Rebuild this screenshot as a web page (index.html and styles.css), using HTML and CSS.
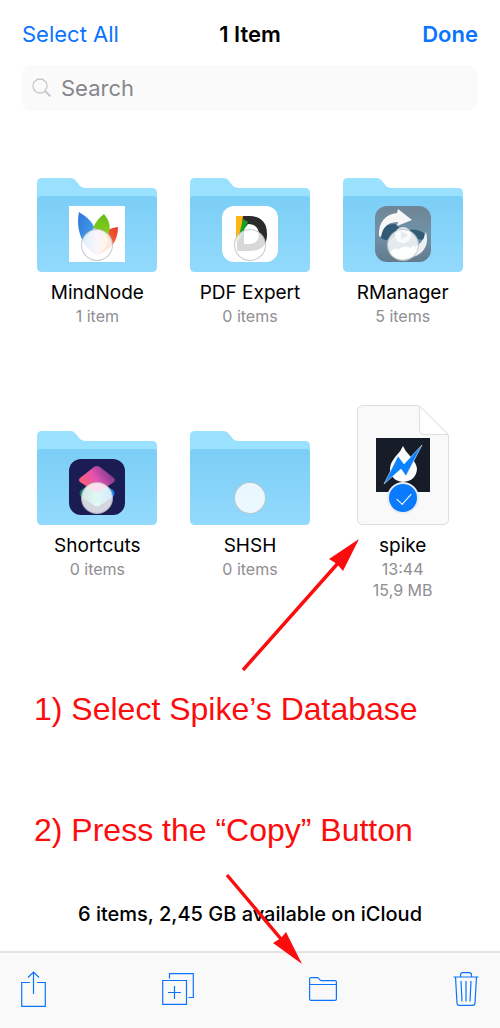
FILE: index.html
```html
<!DOCTYPE html>
<html lang="en">
<head>
<meta charset="utf-8">
<meta name="viewport" content="width=device-width, initial-scale=1">
<title>Files</title>
<link rel="stylesheet" href="styles.css">
</head>
<body>
<svg class="defs" width="0" height="0" aria-hidden="true">
  <defs>
    <linearGradient id="front" x1="0" y1="0" x2="0" y2="1"><stop offset="0" stop-color="#7bcef6"/><stop offset="1" stop-color="#93dafd"/></linearGradient>
    <linearGradient id="slate" x1="0" y1="0" x2="0" y2="1"><stop offset="0" stop-color="#6f8494"/><stop offset=".5" stop-color="#7192a9"/><stop offset="1" stop-color="#647a8c"/></linearGradient>
    <linearGradient id="leafBlue" x1="0" y1="0" x2="1" y2="1"><stop offset="0" stop-color="#2f75dc"/><stop offset="1" stop-color="#4ab3f2"/></linearGradient>
    <linearGradient id="leafGreen" x1="0" y1="0" x2="0" y2="1"><stop offset="0" stop-color="#62bd18"/><stop offset="1" stop-color="#a6d91f"/></linearGradient>
    <linearGradient id="leafRed" x1="1" y1="0" x2="0" y2="1"><stop offset="0" stop-color="#e8352c"/><stop offset="1" stop-color="#ffa32b"/></linearGradient>
    <linearGradient id="leafMix" x1="0" y1="0" x2="1" y2="0"><stop offset="0" stop-color="#43b9ee"/><stop offset=".5" stop-color="#e9c9ee"/><stop offset="1" stop-color="#ffc657"/></linearGradient>
    <linearGradient id="pink" x1="0" y1=".8" x2="1" y2=".3"><stop offset="0" stop-color="#ff6460"/><stop offset=".5" stop-color="#e653b0"/><stop offset="1" stop-color="#6b3588"/></linearGradient>
    <linearGradient id="teal" x1="0" y1="0" x2="1" y2="0"><stop offset="0" stop-color="#176567"/><stop offset=".5" stop-color="#58dcc5"/><stop offset="1" stop-color="#087bf4"/></linearGradient>
    <symbol id="folder" viewBox="0 0 120 94">
      <path fill="#99e1ff" d="M0 90V5Q0 0 5 0H33Q37 0 39 3L43 8Q45 10 49 10H115Q120 10 120 15V90Z"/>
      <path fill="url(#front)" d="M0 22Q0 18 4 18H116Q120 18 120 22V89Q120 94 115 94H5Q0 94 0 89Z"/>
    </symbol>
  </defs>
</svg>

<header class="navbar">
  <button class="nav-btn" type="button">Select All</button>
  <h1 class="title">1 Item</h1>
  <button class="nav-btn nav-done" type="button">Done</button>
</header>

<label class="search">
  <svg class="search-icon" viewBox="0 0 20 20" aria-hidden="true"><circle cx="8" cy="8" r="7"/><path d="M13 13L18.500 18.500" stroke-width="2"/></svg>
  <input class="search-input" type="search" placeholder="Search" aria-label="Search">
</label>

<main class="content">
  <ul class="grid">
    <li class="tile">
      <div class="thumb">
        <svg class="folder" viewBox="0 0 120 94" aria-hidden="true">
          <use href="#folder"/>
          <path fill="#fff" d="M32 28h56v56H32z"/>
          <path fill="url(#leafBlue)" d="M42 34C50 39 56 44 58 52L60 77C47 70 38 54 42 34Z"/>
          <path fill="url(#leafRed)" d="M81 49C81 63 74 72 60 77L62 58Q70 50 81 49Z"/>
          <path fill="url(#leafGreen)" d="M67 36C73 43 74 50 71 57L60 72L56 50Q60 41 67 36Z"/>
          <path fill="url(#leafMix)" d="M47 65Q52 54 57 50Q66 52 72 62Q69 71 60 77Q50 71 47 65Z"/>
        </svg>
        <input class="check" type="checkbox" id="f1">
      </div>
      <label class="name" for="f1">MindNode</label>
      <span class="meta">1 item</span>
    </li>
    <li class="tile">
      <div class="thumb">
        <svg class="folder" viewBox="0 0 120 94" aria-hidden="true">
          <use href="#folder"/>
          <rect x="32" y="28" width="56" height="56" rx="12" fill="#fff"/>
          <path fill="#2b2b2d" fill-rule="evenodd" d="M47 38H60Q77 39 77 56Q77 73 60 73H47ZM54 51V66H60Q69 65 69 56Q68 46 58 46Z"/>
          <path fill="#ffb514" d="M46 38H53L51 57L46 65Z"/>
          <path fill="#14a51e" d="M53 41L58 44L47 66Z"/>
        </svg>
        <input class="check" type="checkbox" id="f2">
      </div>
      <label class="name" for="f2">PDF Expert</label>
      <span class="meta">0 items</span>
    </li>
    <li class="tile">
      <div class="thumb">
        <svg class="folder" viewBox="0 0 120 94" aria-hidden="true">
          <use href="#folder"/>
          <rect x="32" y="28" width="56" height="56" rx="12" fill="url(#slate)"/>
          <path fill="#315b75" d="M38 60C37 50 43 46 52 46L58 51L49 61L42 62ZM66 52Q73 50 81 55V62L73 61Z"/>
          <path fill="#f7f7f7" d="M36 58C35 44 43 36 54 35L55 31L69 42L54 48L55 44C47 44 40 47 38 59Z"/>
          <path fill="#eef1f3" d="M83 54C87 69 79 78 65 80L70 70Q80 66 83 54Z"/>
          <path fill="#f4f6f7" d="M47 76Q49 69 56 71Q62 66 67 70L72 67Q72 78 62 81Q52 82 47 76Z"/>
          <circle cx="60" cy="57" r="8" fill="#dce5eb"/>
          <path fill="#6e8fa5" d="M58 53L65 57L58 62Z"/>
        </svg>
        <input class="check" type="checkbox" id="f3">
      </div>
      <label class="name" for="f3">RManager</label>
      <span class="meta">5 items</span>
    </li>
    <li class="tile">
      <div class="thumb">
        <svg class="folder" viewBox="0 0 120 94" aria-hidden="true">
          <use href="#folder"/>
          <rect x="32" y="28" width="56" height="56" rx="12" fill="#1c1c55"/>
          <path fill="url(#teal)" d="M44 59L58 51Q60 50 62 51L76 59Q79 62 76 66L62 75Q60 76 58 75L44 66Q41 62 44 59Z"/>
          <path fill="url(#pink)" d="M43 47L57 36Q60 34 63 36L77 47Q79 49 77 51L63 60Q60 62 57 60L43 51Q41 49 43 47Z"/>
        </svg>
        <input class="check" type="checkbox" id="f4">
      </div>
      <label class="name" for="f4">Shortcuts</label>
      <span class="meta">0 items</span>
    </li>
    <li class="tile">
      <div class="thumb">
        <svg class="folder" viewBox="0 0 120 94" aria-hidden="true"><use href="#folder"/></svg>
        <input class="check" type="checkbox" id="f5">
      </div>
      <label class="name" for="f5">SHSH</label>
      <span class="meta">0 items</span>
    </li>
    <li class="tile">
      <div class="thumb">
        <svg class="file" viewBox="0 0 92 120" aria-hidden="true">
          <path fill="#f9f9f9" stroke="#dedede" d="M6.500 .5H61.500L91.500 30V114Q91.500 119.500 86 119.500H6Q.5 119.500 .5 114V6Q.5 .5 6.500 .5Z"/>
          <path fill="#fff" stroke="#dedede" d="M62.500 1V24Q62.500 29.500 68 29.500H91Z"/>
          <path fill="#171d28" d="M19 33h54v54H19z"/>
          <path fill="#fff" d="M46 41Q48 46 53 51Q60 59 60 64Q59 76 46 77Q34 76 33 64Q33 58 39 51Q44 46 46 41Z"/>
          <path fill="#0b83ff" stroke="#fff" stroke-width=".5" d="M65 40L49 71L44 64L27 79L41 51L47 59Z"/>
        </svg>
        <input class="check" type="checkbox" id="f6" checked>
      </div>
      <label class="name" for="f6">spike</label>
      <span class="meta">13:44</span>
      <span class="meta">15,9 MB</span>
    </li>
  </ul>

  <p class="note note-select">1) Select Spike’s Database
    <svg class="arrow arrow-up" viewBox="0 0 120 134" aria-hidden="true"><path class="shaft" d="M2 131L98 23"/><path class="head" d="M118 0L102 32L96 25L88 20Z"/></svg>
  </p>
  <p class="note note-copy">2) Press the “Copy” Button
    <svg class="arrow arrow-down" viewBox="0 0 78 92" aria-hidden="true"><path class="shaft" d="M2 2L56 66"/><path class="head" d="M77 91L48 70L56 65L61 59Z"/></svg>
  </p>
  <p class="status">6 items, 2,45 GB available on iCloud</p>
</main>

<footer class="toolbar">
  <button class="tool" type="button" aria-label="Share"><svg width="25" height="36" viewBox="0 0 25 36"><path d="M9 11.500H.7V35.300H24.300V11.500H16M12.500 23V1M7 6.500L12.500 1L18 6.500"/></svg></button>
  <button class="tool" type="button" aria-label="Duplicate"><svg width="32" height="32" viewBox="0 0 32 32"><path d="M.7 7.500H24.500V31.300H.7ZM7.500 5.500V.7H31.300V24.500H26.500M12.500 13V26M6 19.500H19"/></svg></button>
  <button class="tool" type="button" aria-label="Move to folder"><svg width="28" height="24" viewBox="0 0 28 24"><path d="M.6 22V2Q.6 .6 2 .6H8Q9.500 .6 10.300 2Q11 3.600 12.500 3.600H26Q27.400 3.600 27.400 5V22Q27.400 23.400 26 23.400H2Q.6 23.400 .6 22ZM.6 7.500H27.400"/></svg></button>
  <button class="tool" type="button" aria-label="Delete"><svg width="26" height="34" viewBox="0 0 26 34"><path d="M.5 5H25.500M2.500 5L4 31Q4.200 33.300 6 33.300H20Q21.800 33.300 22 31L23.500 5M7.500 5V3Q7.500 .7 9.500 .7H16.500Q18.500 .7 18.500 3V5M8 9L9 29.500M13 9V29.500M18 9L17 29.500"/></svg></button>
</footer>
</body>
</html>
```
FILE: styles.css
```css
* {
  box-sizing: border-box;
}

body {
  margin: 0;
  min-height: 100vh;
  display: flex;
  flex-direction: column;
  background: #fff;
  color: #000;
  font-family: Inter, "Liberation Sans", sans-serif;
}

button {
  margin: 0;
  padding: 0;
  border: 0;
  background: none;
  font: inherit;
  cursor: pointer;
}

.defs {
  position: absolute;
}

.navbar {
  display: grid;
  grid-template-columns: 1fr auto 1fr;
  align-items: center;
  padding: 20px 22px 17px;
  font-size: 22px;
  line-height: 28px;
}

.nav-btn {
  justify-self: start;
  color: #0a74ff;
}

.nav-done {
  justify-self: end;
  font-weight: 600;
}

.title {
  margin: 0;
  font-size: 22px;
  font-weight: 600;
}

.search {
  display: flex;
  align-items: center;
  gap: 9px;
  height: 46px;
  margin: 0 22px;
  padding: 0 10px;
  border-radius: 10px;
  background: #fafafa;
}

.search-icon {
  width: 20px;
  height: 20px;
  fill: none;
  stroke: #c9c9cb;
  stroke-width: 1.3;
}

.search-input {
  flex: 1;
  min-width: 0;
  padding: 0;
  border: 0;
  outline: 0;
  background: none;
  font: inherit;
  font-size: 22px;
}

.search-input::placeholder {
  color: #87878b;
}

.content {
  display: flex;
  flex-direction: column;
}

.grid {
  display: grid;
  grid-template-columns: repeat(3, 1fr);
  row-gap: 78px;
  margin: 41px 21px 0;
  padding: 0;
  list-style: none;
}

.tile {
  display: flex;
  flex-direction: column;
  align-items: center;
}

.thumb {
  position: relative;
  display: flex;
  align-items: flex-end;
  justify-content: center;
  width: 120px;
  height: 120px;
  margin-bottom: 8px;
}

.folder {
  width: 120px;
  height: 94px;
}

.file {
  width: 92px;
  height: 120px;
}

.check {
  appearance: none;
  position: absolute;
  bottom: 11px;
  left: 44px;
  width: 32px;
  height: 32px;
  margin: 0;
  border: 1px solid rgba(110, 125, 135, 0.4);
  border-radius: 50%;
  background: rgba(255, 255, 255, 0.82);
}

.check:checked {
  border: 2px solid #e9edf3;
  background: #0a7aff;
}

.check:checked::after {
  content: "";
  position: absolute;
  top: 6px;
  left: 11px;
  width: 7px;
  height: 13px;
  border: solid #fff;
  border-width: 0 1px 1px 0;
  transform: rotate(42deg);
}

.name {
  font-size: 19px;
  line-height: 26px;
}

.meta {
  color: #8e8e93;
  font-size: 16px;
  line-height: 21px;
}

.note {
  position: relative;
  margin: 0 34px;
  color: #fc0d0d;
  font-family: "Liberation Sans", Arial, sans-serif;
  font-size: 32px;
  line-height: 36px;
}

.note-select {
  margin-top: 90px;
}

.note-copy {
  margin-top: 85px;
}

.arrow {
  position: absolute;
  z-index: 1;
}

.arrow-up {
  left: 207px;
  bottom: 54px;
  width: 120px;
  height: 134px;
}

.arrow-down {
  left: 191px;
  top: 61px;
  width: 78px;
  height: 92px;
}

.shaft {
  fill: none;
  stroke: #fc0d0d;
  stroke-width: 3.4;
}

.head {
  fill: #fc0d0d;
}

.status {
  margin: 54px 0 25px;
  font-size: 20px;
  font-weight: 500;
  line-height: 24px;
  text-align: center;
}

.toolbar {
  display: flex;
  align-items: center;
  justify-content: space-between;
  height: 77px;
  margin-top: auto;
  padding: 0 21px 4px;
  border-top: 2px solid #e3e3e3;
  background: #f9f9f9;
}

.tool {
  display: flex;
}

.tool svg {
  fill: none;
  stroke: #0a74ff;
  stroke-width: 1.2;
}
```
